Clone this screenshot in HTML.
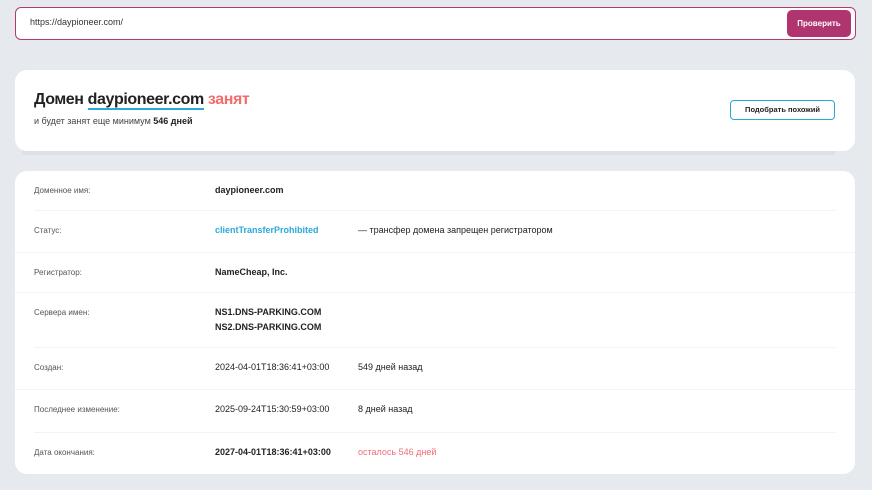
<!DOCTYPE html>
<html><head><meta charset="utf-8"><style>
*{margin:0;padding:0;box-sizing:border-box}
body{width:872px;height:490px;background:#e6eaee;font-family:"Liberation Sans","DejaVu Sans",sans-serif;position:relative;overflow:hidden;color:#222}
.abs{position:absolute;white-space:nowrap}
.inp{left:15px;top:7px;width:841px;height:33px;background:#fff;border:1px solid #b5396f;border-radius:6px}
.btn{left:787px;top:10px;width:64px;height:27px;background:#b0356f;border-radius:5px;color:#fff;font-size:8px;font-weight:bold;text-align:center;line-height:27px}
.card1{left:15px;top:70px;width:840px;height:81px;background:#fff;border-radius:12px}
.sh{left:22px;top:150px;width:813px;height:5px;background:#dde1e5}
.card2{left:15px;top:171px;width:840px;height:303px;background:#fff;border-radius:12px}
.lab{font-size:8px;color:#555;left:34px}
.val{font-size:9px;color:#222;left:215px}
.b{font-weight:bold}
.ex{font-size:9px;left:358px;color:#222}
.sep{height:1px;background:#f1f3f5}
</style></head><body>
<div class="abs inp"></div>
<div class="abs" style="left:30px;top:17px;font-size:9px;color:#333">https://daypioneer.com/</div>
<div class="abs btn">Проверить</div>
<div class="abs sh"></div>
<div class="abs card1"></div>
<div class="abs" style="left:34px;top:91px;font-size:16px;letter-spacing:-0.4px;font-weight:bold;color:#222">Домен <span style="border-bottom:2px solid #2aa9d9">daypioneer.com</span> <span style="color:#f36d6d">занят</span></div>
<div class="abs" style="left:34px;top:116px;font-size:9px;color:#444">и будет занят еще минимум <b style="color:#222">546 дней</b></div>
<div class="abs" style="left:730px;top:100px;width:105px;height:20px;border:1px solid #2aa9d9;border-radius:4px;font-size:7.5px;font-weight:bold;text-align:center;line-height:18px;color:#222">Подобрать похожий</div>
<div class="abs card2"></div>
<div class="abs lab" style="top:186px">Доменное имя:</div><div class="abs val b" style="top:185px">daypioneer.com</div>
<div class="abs sep" style="left:34px;top:210px;width:801px"></div>
<div class="abs lab" style="top:226px">Статус:</div><div class="abs val b" style="top:225px;color:#2aa9d9">clientTransferProhibited</div><div class="abs ex" style="top:225px">— трансфер домена запрещен регистратором</div>
<div class="abs sep" style="left:15px;top:252px;width:840px"></div>
<div class="abs lab" style="top:268px">Регистратор:</div><div class="abs val b" style="top:267px">NameCheap, Inc.</div>
<div class="abs sep" style="left:15px;top:292px;width:840px"></div>
<div class="abs lab" style="top:308px">Сервера имен:</div><div class="abs val b" style="top:307px">NS1.DNS-PARKING.COM</div><div class="abs val b" style="top:322px">NS2.DNS-PARKING.COM</div>
<div class="abs sep" style="left:34px;top:347px;width:801px"></div>
<div class="abs lab" style="top:363px">Создан:</div><div class="abs val" style="top:362px">2024-04-01T18:36:41+03:00</div><div class="abs ex" style="top:362px">549 дней назад</div>
<div class="abs sep" style="left:15px;top:389px;width:840px"></div>
<div class="abs lab" style="top:405px">Последнее изменение:</div><div class="abs val" style="top:404px">2025-09-24T15:30:59+03:00</div><div class="abs ex" style="top:404px">8 дней назад</div>
<div class="abs sep" style="left:34px;top:432px;width:801px"></div>
<div class="abs lab" style="top:448px">Дата окончания:</div><div class="abs val b" style="top:447px">2027-04-01T18:36:41+03:00</div><div class="abs ex" style="top:447px;color:#f06c7a">осталось 546 дней</div>
</body></html>
